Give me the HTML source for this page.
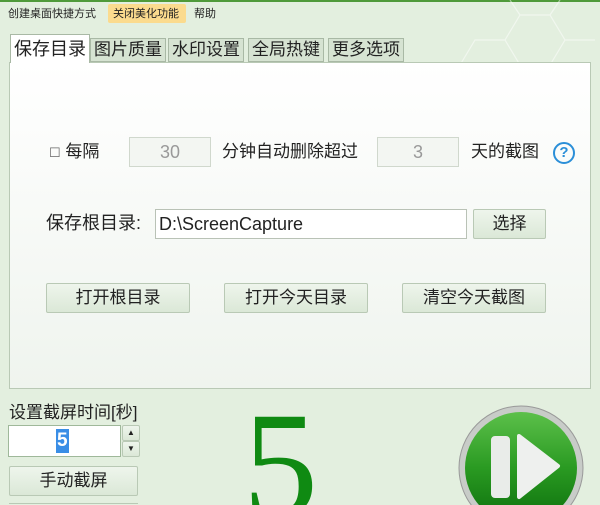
<!DOCTYPE html>
<html><head><meta charset="utf-8"><style>
*{margin:0;padding:0;box-sizing:border-box}
html,body{width:600px;height:505px;overflow:hidden}
body{background:#e3efdf;font-family:"Liberation Sans","Noto Sans CJK SC",sans-serif;color:#222}
#w{position:relative;width:600px;height:505px;overflow:hidden}
.a{position:absolute;line-height:1.15}
.btn{position:absolute;border:1px solid #b9c9b5;border-radius:2px;background:linear-gradient(#eef5ec,#dbe8d7);font-size:17px;text-align:center;color:#222}
.inp{position:absolute;border:1px solid #d0d8cd;background:#f3f6f2;color:#999;font-size:18px;text-align:center}
.tab{position:absolute;top:38px;height:24px;border:1px solid #a9b9a5;background:#d6e3d2;font-size:17px;line-height:22px;padding:0 3px}
</style></head><body><div id="w">
<div class="a" style="left:0;top:0;width:600px;height:2px;background:#4f9a3a"></div>
<svg class="a" style="left:420px;top:0" width="180" height="90"><g fill="none" stroke="#fff" stroke-width="1.2" opacity=".5"><path d="M40 65 L55 40 L85 40 L100 65 L85 90 M100 65 L130 65 L145 40 L130 15 L100 15 L85 40 M145 40 L175 40 M130 15 L140 0 M100 15 L90 0"/></g></svg>
<div class="a" style="left:8px;top:8px;font-size:11px">创建桌面快捷方式</div>
<div class="a" style="left:108px;top:4px;width:78px;height:19px;background:#fbdb8e;border-radius:2px;font-size:11px;padding:4px 0 0 5px">关闭美化功能</div>
<div class="a" style="left:194px;top:8px;font-size:11px">帮助</div>
<div class="a" style="left:9px;top:62px;width:582px;height:327px;border:1px solid #b9c9b5;background:linear-gradient(#fff,#eff4ee)"></div>
<div class="tab" style="left:10px;top:34px;height:29px;background:#fff;border-bottom:none;font-size:18px;line-height:28px">保存目录</div>
<div class="tab" style="left:90px">图片质量</div>
<div class="tab" style="left:168px">水印设置</div>
<div class="tab" style="left:248px">全局热键</div>
<div class="tab" style="left:328px">更多选项</div>
<div class="a" style="left:49px;top:142px;font-size:17px"><span style="font-size:13px;color:#666">☐</span> 每隔</div>
<div class="inp" style="left:129px;top:137px;width:82px;height:30px;line-height:28px">30</div>
<div class="a" style="left:222px;top:142px;font-size:17px">分钟自动删除超过</div>
<div class="inp" style="left:377px;top:137px;width:82px;height:30px;line-height:28px">3</div>
<div class="a" style="left:471px;top:142px;font-size:17px">天的截图</div>
<div class="a" style="left:553px;top:142px;width:22px;height:22px;border:2px solid #2b8fd8;border-radius:50%;color:#2b8fd8;font-size:15px;font-weight:bold;text-align:center;line-height:18px">?</div>
<div class="a" style="left:46px;top:213px;font-size:18px">保存根目录:</div>
<div class="a" style="left:155px;top:209px;width:312px;height:30px;border:1px solid #b9c2b6;background:#fff;font-size:18px;line-height:28px;padding-left:3px">D:\ScreenCapture</div>
<div class="btn" style="left:473px;top:209px;width:73px;height:30px;line-height:28px">选择</div>
<div class="btn" style="left:46px;top:283px;width:144px;height:30px;line-height:28px">打开根目录</div>
<div class="btn" style="left:224px;top:283px;width:144px;height:30px;line-height:28px">打开今天目录</div>
<div class="btn" style="left:402px;top:283px;width:144px;height:30px;line-height:28px">清空今天截图</div>
<div class="a" style="left:9px;top:403px;font-size:17px">设置截屏时间[秒]</div>
<div class="a" style="left:8px;top:425px;width:113px;height:32px;border:1px solid #9fb89a;background:#fff"><span style="position:absolute;left:47px;top:3px;background:#3a8ee6;color:#fff;font-size:19px;font-weight:bold;line-height:24px;padding:0 1px">5</span></div>
<div class="btn" style="left:122px;top:425px;width:18px;height:16px;font-size:8px;line-height:14px">▲</div>
<div class="btn" style="left:122px;top:441px;width:18px;height:16px;font-size:8px;line-height:14px">▼</div>
<div class="btn" style="left:9px;top:466px;width:129px;height:30px;line-height:28px">手动截屏</div>
<div class="a" style="left:9px;top:503px;width:129px;height:2px;border-top:1px solid #b9c9b5"></div>
<div class="a" style="left:243px;top:390px;height:115px;overflow:hidden;font-family:'Liberation Serif',serif;font-size:150px;color:#0f8a12;line-height:150px">5</div>
<svg class="a" style="left:457px;top:404px" width="128" height="101">
<defs><linearGradient id="g" x1="0" y1="0" x2="0" y2="1"><stop offset="0" stop-color="#5cc04a"/><stop offset=".5" stop-color="#2a9a22"/><stop offset="1" stop-color="#0c6f0c"/></linearGradient></defs>
<circle cx="64" cy="64" r="62" fill="#c8ccc8" stroke="#999" stroke-width="1"/>
<circle cx="64" cy="64" r="56" fill="url(#g)"/>
<rect x="34" y="32" width="19" height="62" rx="4" fill="#e9ece9"/>
<path d="M62 32 L101 62 L62 93 Z" fill="#eef0ee" stroke="#eef0ee" stroke-width="4" stroke-linejoin="round"/>
</svg>
</div></body></html>
